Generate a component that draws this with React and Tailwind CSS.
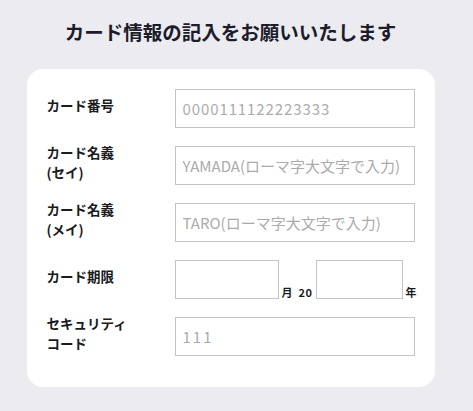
import React, { useState } from "react";

const font = { fontFamily: '"Noto Sans CJK JP", "Noto Sans", sans-serif' };

const inputClass =
  "h-[39px] border border-[#c4c4c4] bg-white pl-[7px] text-[15px] text-[#333] outline-none placeholder:text-[#ababab]";

const Row = ({ label, children }) => (
  <div className="flex items-center">
    <div className="w-[128px] shrink-0 -mt-[8px] text-[13.5px] leading-[20px] font-bold text-[#1b1b1f]">
      {label}
    </div>
    {children}
  </div>
);

const App = () => {
  const [state, setState] = useState({
    number: "",
    sei: "",
    mei: "",
    month: "",
    year: "",
    cvc: "",
  });

  const handleInputChange = (e) => {
    const { name, value } = e.target;
    setState({ ...state, [name]: value });
  };

  return (
    <div className="min-h-screen bg-[#ecebf0]" style={font}>
      <div className="w-[461px] flex flex-col items-center pt-[18px]">
        <h1 className="text-[19.5px] leading-[28px] font-bold text-[#1c1c2b]">
          カード情報の記入をお願いいたします
        </h1>

        {/* Card form */}
        <div className="mt-[23px] w-[408px] rounded-[16px] bg-white px-5 pt-5 pb-[31px] flex flex-col gap-[18px]">
          <Row label="カード番号">
            <input
              type="text"
              name="number"
              placeholder="0000111122223333"
              value={state.number}
              onChange={handleInputChange}
              className={`${inputClass} w-[240px] tracking-[0.9px]`}
            />
          </Row>

          <Row
            label={
              <>
                カード名義
                <br />
                (セイ)
              </>
            }
          >
            <input
              type="text"
              name="sei"
              placeholder="YAMADA(ローマ字大文字で入力)"
              value={state.sei}
              onChange={handleInputChange}
              className={`${inputClass} w-[240px]`}
            />
          </Row>

          <Row
            label={
              <>
                カード名義
                <br />
                (メイ)
              </>
            }
          >
            <input
              type="text"
              name="mei"
              placeholder="TARO(ローマ字大文字で入力)"
              value={state.mei}
              onChange={handleInputChange}
              className={`${inputClass} w-[240px]`}
            />
          </Row>

          <Row label="カード期限">
            <div className="flex items-end">
              <input
                type="text"
                name="month"
                value={state.month}
                onChange={handleInputChange}
                className={`${inputClass} w-[104px] shrink-0`}
              />
              <span className="ml-[3px] text-[11px] leading-none font-bold text-[#1b1b1f] pb-[1px]">
                月
              </span>
              <span className="ml-[6px] mr-[4px] text-[11px] leading-none font-bold text-[#1b1b1f] pb-[1px] tracking-[0.5px]">
                20
              </span>
              <input
                type="text"
                name="year"
                value={state.year}
                onChange={handleInputChange}
                className={`${inputClass} w-[87px] shrink-0`}
              />
              <span className="ml-[2px] shrink-0 text-[11px] leading-none font-bold text-[#1b1b1f] pb-[1px]">
                年
              </span>
            </div>
          </Row>

          <Row
            label={
              <>
                セキュリティ
                <br />
                コード
              </>
            }
          >
            <input
              type="text"
              name="cvc"
              placeholder="111"
              value={state.cvc}
              onChange={handleInputChange}
              className={`${inputClass} w-[240px] tracking-[2px]`}
            />
          </Row>
        </div>
      </div>
    </div>
  );
};

export default App;
